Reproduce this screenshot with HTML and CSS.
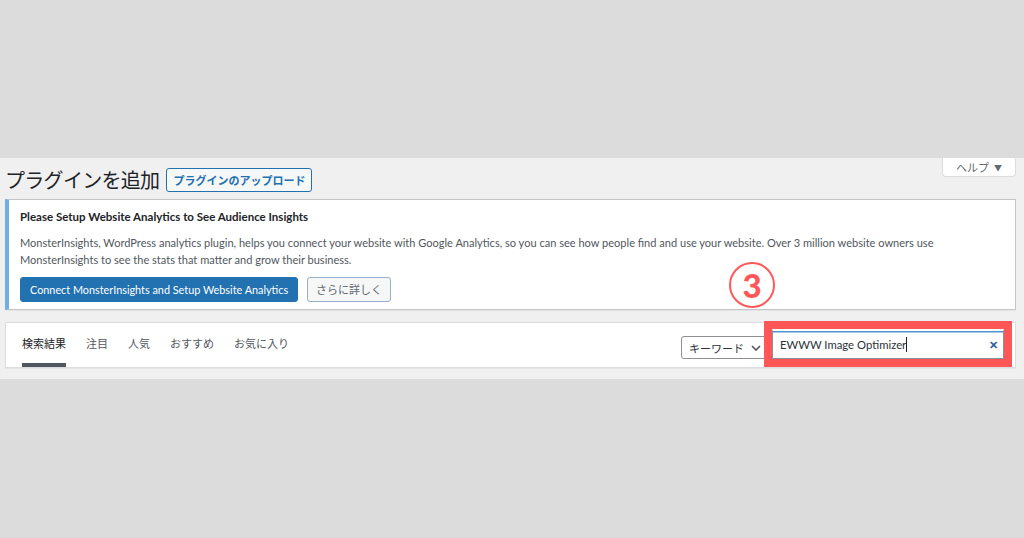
FILE: index.html
```html
<!DOCTYPE html>
<html lang="ja">
<head>
  <meta charset="UTF-8">
  <meta name="viewport" content="width=device-width, initial-scale=1.0">
  <title>プラグインを追加</title>
  <link rel="stylesheet" href="styles.css">
</head>
<body>

  <div class="shot">
    <div class="head">
      <h1>プラグインを追加</h1>
      <a class="upload">プラグインのアップロード</a>
      <button class="help">ヘルプ<small>▼</small></button>
    </div>

    <div class="notice">
      <h3>Please Setup Website Analytics to See Audience Insights</h3>
      <p>MonsterInsights, WordPress analytics plugin, helps you connect your website with Google Analytics, so you can see how people find and use your website. Over 3 million website owners use<br>MonsterInsights to see the stats that matter and grow their business.</p>
      <div class="actions">
        <a class="btn-primary">Connect MonsterInsights and Setup Website Analytics</a>
        <a class="btn-secondary">さらに詳しく</a>
      </div>
    </div>

    <div class="filter">
      <ul class="tabs">
        <li class="current">検索結果</li>
        <li>注目</li>
        <li>人気</li>
        <li>おすすめ</li>
        <li>お気に入り</li>
      </ul>
      <div class="search">
        <div class="select">キーワード
          <svg class="chev" width="10" height="6" viewBox="0 0 10 6"><path d="M1 1l4 4 4-4" fill="none" stroke="#50575e" stroke-width="1.6"/></svg>
        </div>
        <div class="field">
          <span>EWWW Image Optimizer</span><i class="caret"></i>
          <b class="clear">✕</b>
        </div>
      </div>
    </div>

    <!-- step marker -->
    <div class="step">3</div>
  </div>

</body>
</html>
```

FILE: styles.css
```css
* {
  margin: 0;
  padding: 0;
  box-sizing: border-box;
}
body {
  background-color: #dcdcdc;
  font-family: 'Lato', 'Noto Sans CJK JP', sans-serif;
  height: 538px;
  overflow: hidden;
}
.shot {
  position: relative;
  margin-top: 158px;
  height: 221px;
  background-color: #f0f0f1;
  padding: 0 8px 0 5px;
}
.head {
  height: 41px;
  display: flex;
  align-items: center;
  gap: 7px;
  padding-top: 3px;
}
h1 {
  font-family: 'Noto Sans CJK JP', sans-serif;
  font-weight: 400;
  font-size: 20px;
  line-height: 1;
  color: #1d2327;
  letter-spacing: -0.7px;
}
.upload {
  height: 24px;
  line-height: 22px;
  padding: 0 6px;
  border: 1px solid #2271b1;
  border-radius: 3px;
  background-color: #f6f7f7;
  color: #2271b1;
  font-family: 'Noto Sans CJK JP', sans-serif;
  font-size: 11px;
  font-weight: 700;
}
.help {
  margin-left: auto;
  align-self: flex-start;
  margin-top: -3px;
  width: 74px;
  height: 19px;
  border: 1px solid #dcdcde;
  border-top: none;
  border-radius: 0 0 4px 4px;
  background-color: #fff;
  color: #646970;
  font-family: 'Noto Sans CJK JP', sans-serif;
  font-size: 11px;
  line-height: 16px;
}
.help small {
  font-size: 8px;
  margin-left: 5px;
  vertical-align: 1px;
}
.notice {
  background-color: #fff;
  border: 1px solid #c3c4c7;
  border-left: 4px solid #72aee6;
  padding: 7px 12px 7px 11px;
  box-shadow: 0 1px 1px rgba(0, 0, 0, 0.04);
}
.notice h3 {
  font-size: 11.5px;
  font-weight: 700;
  line-height: 20px;
  color: #1d2327;
}
.notice p {
  margin-top: 7px;
  font-size: 11.05px;
  line-height: 17px;
  color: #50575e;
  white-space: nowrap;
}
.actions {
  margin-top: 9px;
  display: flex;
  gap: 9px;
}
.btn-primary, .btn-secondary {
  height: 25px;
  line-height: 23px;
  border-radius: 3px;
  font-size: 11px;
}
.btn-primary {
  padding: 0 9px;
  background-color: #2271b1;
  border: 1px solid #2271b1;
  color: #fff;
  font-size: 10.85px;
}
.btn-secondary {
  padding: 0 8px;
  background-color: #f6f7f7;
  border: 1px solid #95afcb;
  color: #646970;
}
.filter {
  margin-top: 12px;
  height: 46px;
  background-color: #fff;
  border: 1px solid #dcdcde;
  box-shadow: 0 1px 1px rgba(0, 0, 0, 0.04);
  display: flex;
  justify-content: space-between;
  padding: 0 11px 0 16px;
}
.tabs {
  list-style: none;
  display: flex;
  gap: 20px;
}
.tabs li {
  display: flex;
  align-items: center;
  border-bottom: 4px solid transparent;
  font-size: 11px;
  color: #50575e;
}
.tabs .current {
  color: #1d2327;
  border-bottom-color: #50575e;
}
.search {
  display: flex;
  align-items: flex-end;
  align-self: center;
  margin-top: -2px;
}
.select {
  display: flex;
  align-items: center;
  gap: 7px;
  width: 91px;
  height: 23px;
  padding: 0 0 0 7px;
  border: 1px solid #8c8f94;
  border-radius: 3px 0 0 3px;
  font-size: 11px;
  color: #2c3338;
}
.field {
  display: flex;
  align-items: center;
  width: 232px;
  height: 30px;
  padding: 0 7px;
  border: 1px solid #8c8f94;
  border-top: 2px solid #fff;
  box-shadow: inset 0 1.5px 0 #4f94d4;
  outline: 8px solid #ff5757;
  font-size: 11.3px;
  color: #2c3338;
}
.caret {
  width: 1px;
  height: 15px;
  background-color: #1d2327;
}
.clear {
  margin-left: auto;
  margin-right: -2px;
  color: #2f5e9a;
  font-size: 11px;
  font-weight: 700;
}
.step {
  position: absolute;
  left: 729px;
  top: 104px;
  width: 46px;
  height: 46px;
  border: 2.5px solid #ff5a5a;
  border-radius: 50%;
  display: flex;
  align-items: center;
  justify-content: center;
  color: #ff5757;
  font-family: 'Lato', sans-serif;
  font-weight: 900;
  font-size: 33px;
  line-height: 1;
}
```
